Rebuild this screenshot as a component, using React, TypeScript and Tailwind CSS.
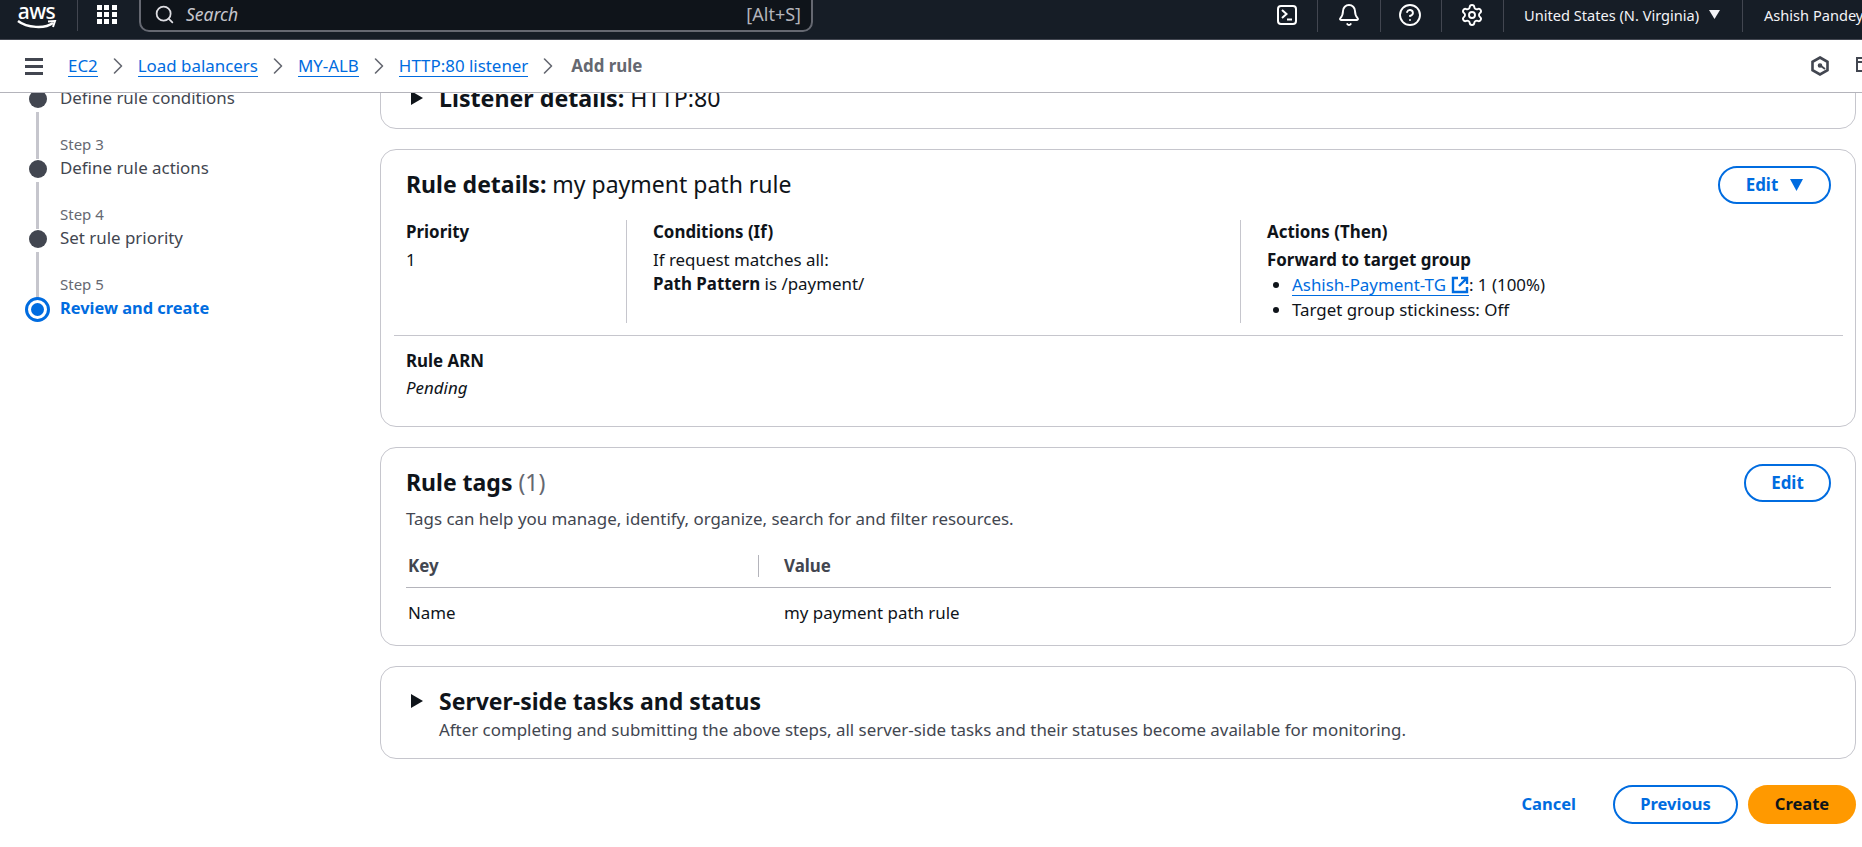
import React from "react";
import { Bell, ChevronRight, CircleHelp, Search, Settings } from "lucide-react";

const Tri = () => (
  <svg width="12" height="14" viewBox="0 0 12 14" className="shrink-0"><path d="M0 0 L12 7 L0 14 Z" fill="#0f141a" /></svg>
);

const Crumb = ({ children }: { children: React.ReactNode }) => (
  <span className="text-[#006ce0] border-b border-[#006ce0] leading-[20px]">{children}</span>
);
const Chev = () => <ChevronRight size={28} strokeWidth={1.4} className="text-[#656871] mx-[-3px]" />;

const Step = ({ n, label, active }: { n: number; label: string; active?: boolean }) => (
  <div className="flex flex-col">
    <div className="flex h-[47px] mt-[3px]">
      <div className="w-[60px] flex justify-center pl-[15px]">
        <div className="w-[3px] h-full bg-[#c6c6cd]" />
      </div>
      <div className="text-[15px] text-[#656871] self-end leading-[20px] pb-[5px]">Step {n}</div>
    </div>
    <div className="flex items-center h-[20px]">
      <div className="w-[60px] flex justify-center pl-[15px]">
        {active ? (
          <div className="w-[25px] h-[25px] rounded-full border-[3px] border-[#006ce0] bg-white flex items-center justify-center shrink-0">
            <div className="w-[13px] h-[13px] rounded-full bg-[#006ce0]" />
          </div>
        ) : (
          <div className="w-[18px] h-[18px] rounded-full bg-[#424650] shrink-0" />
        )}
      </div>
      <div className={active ? "font-bold text-[16.4px] text-[#006ce0] -mt-[2px]" : "text-[#424650] -mt-[2px]"}>{label}</div>
    </div>
  </div>
);

const Divider = () => <div className="w-px h-[34px] bg-[#424650] shrink-0" />;

const IconCell = ({ className, children }: { className: string; children: React.ReactNode }) => (
  <div className={`flex items-center justify-between shrink-0 ${className}`}>
    {children}
    <Divider />
  </div>
);

export default function App() {
  return (
    <div className="w-[1862px] h-[847px] overflow-hidden flex flex-col bg-white text-[#0f141a] text-[16.9px]" style={{ fontFamily: "'Noto Sans', 'Liberation Sans', sans-serif" }}>
      <header className="h-[40px] shrink-0 bg-[#161d26] border-b border-[#424650] flex items-center text-white overflow-hidden">
        <div className="w-[77px] flex flex-col items-center relative -mt-[8px]">
          <span className="text-[21px] font-medium leading-[18px] tracking-[-0.5px] -ml-[4px]">aws</span>
          <svg width="40" height="10" viewBox="0 0 40 10" className="-ml-[4px]"><path d="M1 1 C10 8 28 9 36 3" stroke="#fff" strokeWidth="2.4" fill="none" /><path d="M31 1.5 L38 1 L36 7" stroke="#fff" strokeWidth="2" fill="none" /></svg>
        </div>
        <div className="-mt-[12px]"><Divider /></div>
        <div className="ml-[19px] w-[20px] h-[20px] grid grid-cols-3 gap-[2px] -mt-[10px]">
          {Array.from({ length: 9 }).map((_, i) => <div key={i} className="bg-white w-[5px] h-[5px]" />)}
        </div>
        <div className="ml-[22px] w-[674px] h-[42px] self-start -mt-[10px] rounded-[10px] border-2 border-[#656871] bg-[#0f141a] flex items-center pl-[13px] pr-[10px] pt-[7px]">
          <Search size={21} strokeWidth={2} className="text-[#dedee3]" />
          <span className="ml-[11px] italic text-[#c6c6cd] text-[17.5px]">Search</span>
          <span className="ml-auto text-[#b4b4bb] text-[18px]">[Alt+S]</span>
        </div>
        <div className="ml-auto flex items-center h-full w-[584px] -mt-[10px]">
          <IconCell className="w-[40px]">
            <svg width="20" height="20" viewBox="0 0 20 20" fill="none" stroke="#fff" strokeWidth="2" className="-ml-[1px]"><rect x="1" y="1" width="18" height="18" rx="3" /><path d="M5 5 L9.5 9 L5 13" /><path d="M10 14.5 H15" /></svg>
          </IconCell>
          <IconCell className="w-[63px] pl-[19px]"><Bell size={24} strokeWidth={1.9} /></IconCell>
          <IconCell className="w-[61px] pl-[17px]"><CircleHelp size={24} strokeWidth={1.9} /></IconCell>
          <IconCell className="w-[62px] pl-[18px]"><Settings size={24} strokeWidth={1.9} /></IconCell>
          <span className="ml-[20px] w-[177px] shrink-0 text-[14.6px] leading-[20px] text-[#f3f3f7] whitespace-nowrap">United States (N. Virginia)</span>
          <svg width="11" height="9" viewBox="0 0 11 9" className="ml-[8px] shrink-0"><path d="M0 0 H11 L5.5 9 Z" fill="#f3f3f7" /></svg>
          <div className="ml-[22px]"><Divider /></div>
          <span className="ml-[21px] text-[14.6px] leading-[20px] text-[#f3f3f7] whitespace-nowrap">Ashish Pandey</span>
        </div>
      </header>

      <nav className="h-[53px] shrink-0 border-b border-[#b4b4bb] flex items-center bg-white pl-[25px] z-10 overflow-hidden">
        <div className="w-[18px] flex flex-col gap-[4px]">
          <div className="h-[3px] bg-[#424650]" /><div className="h-[3px] bg-[#424650]" /><div className="h-[3px] bg-[#424650]" />
        </div>
        <div className="ml-[25px] flex items-center gap-[9px]">
          <Crumb>EC2</Crumb><Chev /><Crumb>Load balancers</Crumb><Chev /><Crumb>MY-ALB</Crumb><Chev /><Crumb>HTTP:80 listener</Crumb><Chev />
          <span className="font-bold text-[#656871] ml-[3px]">Add rule</span>
        </div>
        <div className="ml-auto flex items-center gap-[26px] -mr-[18px]">
          <svg width="20" height="20" viewBox="0 0 20 20" fill="none" stroke="#424650" strokeWidth="2.6"><path d="M10 1.5 L17.5 5.8 V14.2 L10 18.5 L2.5 14.2 V5.8 Z" /><circle cx="10" cy="9.5" r="1.6" fill="#424650" strokeWidth="1.4" /><path d="M11 10 L15 13" strokeWidth="1.8" /></svg>
          <svg width="24" height="20" viewBox="0 0 24 20" fill="none" stroke="#424650" strokeWidth="2"><path d="M1 2 H21 V15 H1 Z M1 6 H21 M9 6 V15" /><path d="M8 19 H14" /></svg>
        </div>
      </nav>

      <main className="flex-1 min-h-0 overflow-hidden flex items-start">
        <aside className="w-[380px] shrink-0 -mt-[1px]">
          <div className="flex items-center h-[20px] -mt-[3px]">
            <div className="w-[60px] flex justify-center pl-[15px]"><div className="w-[18px] h-[18px] rounded-full bg-[#424650] shrink-0" /></div>
            <div className="text-[#424650] -mt-[2px]">Define rule conditions</div>
          </div>
          <Step n={3} label="Define rule actions" />
          <Step n={4} label="Set rule priority" />
          <Step n={5} label="Review and create" active />
        </aside>

        <div className="w-[1476px] flex flex-col gap-[20px]">
          <section className="h-[60px] -mt-[24px] border border-[#c6c6cd] rounded-[16px] flex items-start pl-[30px] pt-[13px]">
            <div className="flex items-center gap-[16px]">
              <Tri />
              <div className="text-[23.2px] leading-[30px] whitespace-nowrap"><b>Listener details:</b> HTTP:80</div>
            </div>
          </section>

          <section className="h-[278px] border border-[#c6c6cd] rounded-[16px] pl-[25px] pr-[24px] pt-[16px]">
            <div className="flex items-center justify-between h-[38px]">
              <div className="text-[23px] whitespace-nowrap -mt-[2px]"><b>Rule details:</b> my payment path rule</div>
              <button className="w-[113px] h-[38px] rounded-full border-2 border-[#006ce0] text-[#006ce0] font-bold flex items-center justify-center gap-[12px]">
                Edit
                <svg width="13" height="12" viewBox="0 0 13 12"><path d="M0 0 H13 L6.5 12 Z" fill="#006ce0" /></svg>
              </button>
            </div>
            <div className="mt-[16px] h-[103px] flex">
              <div className="w-[221px] border-r border-[#c6c6cd]">
                <div className="font-bold h-[24px] leading-[24px] mb-[3px]">Priority</div>
                <div className="leading-[25px]">1</div>
              </div>
              <div className="w-[614px] border-r border-[#c6c6cd] pl-[26px]">
                <div className="font-bold h-[24px] leading-[24px] mb-[3px]">Conditions (If)</div>
                <div className="leading-[25px]">If request matches all:</div>
                <div className="leading-[25px] -mt-[1px]"><b>Path Pattern</b> is /payment/</div>
              </div>
              <div className="pl-[26px]">
                <div className="font-bold h-[24px] leading-[24px] mb-[3px]">Actions (Then)</div>
                <div className="font-bold leading-[25px]">Forward to target group</div>
                <ul className="list-disc pl-[25px] leading-[25px]">
                  <li>
                    <span className="text-[#006ce0] border-b border-[#006ce0] inline-flex items-center gap-[5px] leading-[20px]">Ashish-Payment-TG
                      <svg width="18" height="18" viewBox="0 0 18 18" fill="none" stroke="#006ce0" strokeWidth="2.4"><path d="M7 2 H2 V16 H16 V11" /><path d="M8 10 L15 3 M10 2 H16 V8" /></svg>
                    </span>: 1 (100%)
                  </li>
                  <li>Target group stickiness: Off</li>
                </ul>
              </div>
            </div>
            <div className="h-px bg-[#c6c6cd] mt-[12px] -mx-[12px]" />
            <div className="font-bold leading-[24px] mt-[13px]">Rule ARN</div>
            <div className="italic leading-[24px] mt-[3px]">Pending</div>
          </section>

          <section className="h-[199px] border border-[#c6c6cd] rounded-[16px] pl-[25px] pr-[24px] pt-[16px]">
            <div className="flex items-center justify-between h-[38px]">
              <div className="text-[23px] font-bold -mt-[2px]">Rule tags <span className="font-normal text-[#656871]">(1)</span></div>
              <button className="w-[87px] h-[38px] rounded-full border-2 border-[#006ce0] text-[#006ce0] font-bold">Edit</button>
            </div>
            <div className="mt-[5px] leading-[24px] text-[#424650]">Tags can help you manage, identify, organize, search for and filter resources.</div>
            <div className="mt-[14px] h-[43px] flex items-center border-b border-[#b4b4bb] font-bold text-[#424650]">
              <div className="w-[353px] pl-[2px] h-[22px] leading-[22px] border-r border-[#b4b4bb]">Key</div>
              <div className="pl-[25px]">Value</div>
            </div>
            <div className="h-[49px] flex items-center">
              <div className="w-[353px] pl-[2px]">Name</div>
              <div className="pl-[25px]">my payment path rule</div>
            </div>
          </section>

          <section className="h-[93px] border border-[#c6c6cd] rounded-[16px] pl-[30px] pt-[20px]">
            <div className="flex items-center gap-[16px] h-[28px]">
              <Tri />
              <div className="text-[23px] font-bold">Server-side tasks and status</div>
            </div>
            <div className="pl-[28px] mt-[3px] leading-[24px] text-[#424650]">After completing and submitting the above steps, all server-side tasks and their statuses become available for monitoring.</div>
          </section>

          <div className="flex justify-end items-center mt-[6px] font-bold text-[16.5px]">
            <span className="text-[#006ce0] mr-[37px]">Cancel</span>
            <button className="w-[125px] h-[39px] rounded-full border-2 border-[#006ce0] text-[#006ce0]">Previous</button>
            <button className="ml-[10px] w-[108px] h-[39px] rounded-full bg-[#ff9900] text-[#0f141a]">Create</button>
          </div>
        </div>
      </main>
    </div>
  );
}
